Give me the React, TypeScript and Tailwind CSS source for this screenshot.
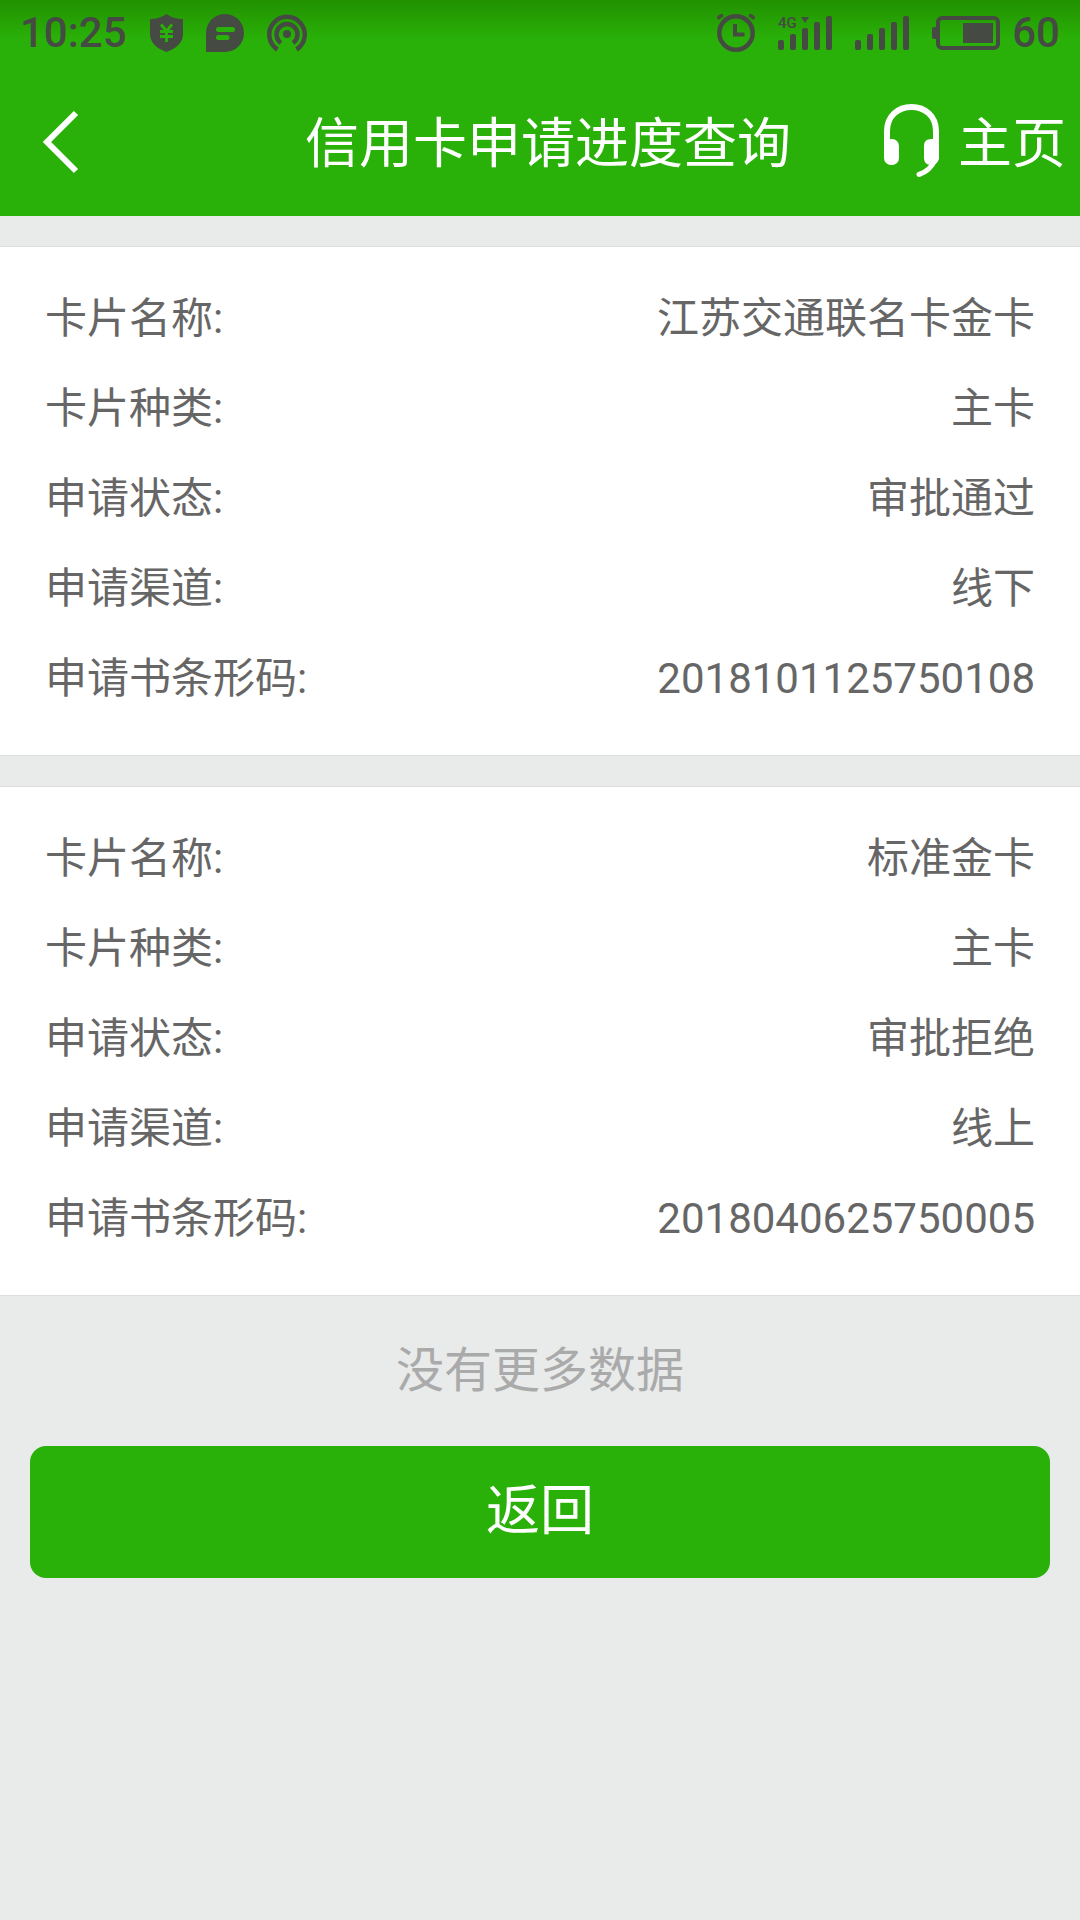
interface Application {
  name: string;
  kind: string;
  status: string;
  channel: string;
  barcode: string;
}

const APPLICATIONS: Application[] = [
  {
    name: "江苏交通联名卡金卡",
    kind: "主卡",
    status: "审批通过",
    channel: "线下",
    barcode: "2018101125750108",
  },
  {
    name: "标准金卡",
    kind: "主卡",
    status: "审批拒绝",
    channel: "线上",
    barcode: "2018040625750005",
  },
];

const FIELDS: { key: keyof Application; label: string }[] = [
  { key: "name", label: "卡片名称:" },
  { key: "kind", label: "卡片种类:" },
  { key: "status", label: "申请状态:" },
  { key: "channel", label: "申请渠道:" },
  { key: "barcode", label: "申请书条形码:" },
];

function ShieldIcon() {
  return (
    <svg width="33" height="38" viewBox="0 0 33 38" aria-hidden="true">
      <path
        d="M16.5 0 C12 3.5 6 5 0 5 V20 C0 29 7 34.5 16.5 38 C26 34.5 33 29 33 20 V5 C27 5 21 3.5 16.5 0Z"
        fill="currentColor"
      />
      <path
        d="M11 10.5 L16.5 17 L22 10.5 M10 17.5 H23 M10 22.5 H23 M16.5 17 V28"
        fill="none"
        stroke="#2ab109"
        strokeWidth="2.8"
      />
    </svg>
  );
}

function ChatIcon() {
  return (
    <svg width="38" height="38" viewBox="0 0 38 38" aria-hidden="true">
      <path d="M0 38 V19 A19 19 0 1 1 19 38Z" fill="currentColor" />
      <path
        d="M12.5 15.5 H26.5 M12.5 23.5 H21"
        stroke="#2ab109"
        strokeWidth="5"
        strokeLinecap="round"
      />
    </svg>
  );
}

function HotspotIcon() {
  return (
    <svg
      width="40"
      height="38"
      viewBox="0 0 40 38"
      fill="none"
      stroke="currentColor"
      strokeWidth="4.5"
      aria-hidden="true"
    >
      <path d="M10.5 35.5 A17.7 17.7 0 1 1 29.5 35.5" />
      <path d="M14 29 A10.5 10.5 0 1 1 26 29" />
      <circle cx="20" cy="20" r="4" fill="currentColor" stroke="none" />
    </svg>
  );
}

function AlarmIcon() {
  return (
    <svg
      width="38"
      height="38"
      viewBox="0 0 38 38"
      fill="none"
      stroke="currentColor"
      strokeWidth="4.5"
      aria-hidden="true"
    >
      <circle cx="19" cy="19" r="16.7" />
      <path d="M18 10 V20.5 H27.5" strokeWidth="4" />
      <path d="M1 5 Q2.5 1.5 6 1.5 M37 5 Q35.5 1.5 32 1.5" strokeWidth="3.5" />
    </svg>
  );
}

function SignalIcon({ network }: { network?: string }) {
  return (
    <svg
      width="54"
      height="34"
      viewBox="0 0 54 34"
      fill="currentColor"
      className="overflow-visible"
      aria-hidden="true"
    >
      <rect x="0" y="24" width="6" height="10" rx="2" />
      <rect x="12" y="18" width="6" height="16" rx="2" />
      <rect x="24" y="12" width="6" height="22" rx="2" />
      <rect x="36" y="6" width="6" height="28" rx="2" />
      <rect x="48" y="0" width="6" height="34" rx="2" />
      {network && (
        <>
          <text x="0" y="12" className="text-[15px] font-medium">
            {network}
          </text>
          <path d="M23 1 H31 L27 7Z" />
        </>
      )}
    </svg>
  );
}

function BatteryIcon() {
  return (
    <svg width="68" height="34" viewBox="0 0 68 34" aria-hidden="true">
      <rect x="6" y="2" width="60" height="30" rx="4" fill="none" stroke="currentColor" strokeWidth="4" />
      <rect x="0" y="11" width="5" height="12" rx="2" fill="currentColor" />
      <rect x="31" y="7" width="30" height="20" fill="currentColor" />
    </svg>
  );
}

function HeadsetIcon() {
  return (
    <svg width="55" height="74" viewBox="0 0 55 74" fill="none" aria-hidden="true">
      <path
        d="M3 52 V27 C3 12 14 3 27.5 3 C41 3 52 12 52 27 V52"
        stroke="currentColor"
        strokeWidth="6"
      />
      <rect x="0" y="35" width="15" height="26" rx="7" fill="currentColor" />
      <path
        d="M40 42 Q40 35 47 35 H52 Q55 35 55 38 V55 Q53 61 47 61 Q40 61 40 54Z"
        fill="currentColor"
      />
      <path d="M51 56 Q46 67 35 70.5" stroke="currentColor" strokeWidth="5" strokeLinecap="round" />
    </svg>
  );
}

function StatusBar() {
  return (
    <div className="flex h-[66px] items-center justify-between bg-linear-to-b from-[#219100] to-[#2ab109] to-60% px-5 text-[#454a43]">
      <div className="flex items-center gap-[23px]">
        <span className="text-[42px] leading-none font-medium">10:25</span>
        <ShieldIcon />
        <ChatIcon />
        <HotspotIcon />
      </div>
      <div className="flex items-center gap-[23px]">
        <AlarmIcon />
        <SignalIcon network="4G" />
        <SignalIcon />
        <div className="flex items-center gap-3">
          <BatteryIcon />
          <span className="text-[42px] leading-none font-medium">60</span>
        </div>
      </div>
    </div>
  );
}

function NavBar() {
  return (
    <nav className="flex h-[150px] items-center bg-[#2ab109] text-[54px] leading-none text-white">
      <div className="w-[212px]">
        <button type="button" aria-label="返回上一页" className="block px-10 py-5">
          <svg width="40" height="66" viewBox="0 0 40 66" fill="none" aria-hidden="true">
            <path d="M36 5 L7 34 L36 63" stroke="currentColor" strokeWidth="6" />
          </svg>
        </button>
      </div>
      <h1 className="flex-1 pt-2 text-center">信用卡申请进度查询</h1>
      <div className="flex items-center gap-[19px] pr-[14px]">
        <button type="button" aria-label="客服">
          <HeadsetIcon />
        </button>
        <a href="#" className="pt-2">
          主页
        </a>
      </div>
    </nav>
  );
}

function ApplicationCard({ application }: { application: Application }) {
  return (
    <dl className="border-y border-[#dcdddc] bg-white px-[45px] pt-[27px] pb-[31px] text-[42px] leading-[90px] text-[#666]">
      {FIELDS.map(({ key, label }) => (
        <div key={key} className="flex justify-between">
          <dt>{label}</dt>
          <dd>{application[key]}</dd>
        </div>
      ))}
    </dl>
  );
}

export default function App() {
  return (
    <div className="min-h-screen bg-[#e8ebea] font-[Roboto,'Noto_Sans_CJK_SC',sans-serif]">
      <header>
        <StatusBar />
        <NavBar />
      </header>
      <main>
        <div className="flex flex-col gap-[30px] pt-[30px]">
          {APPLICATIONS.map((application) => (
            <ApplicationCard key={application.barcode} application={application} />
          ))}
        </div>
        <p className="py-[37px] text-center text-5xl leading-[76px] text-[#aaa]">没有更多数据</p>
        <div className="px-[30px]">
          <button
            type="button"
            className="h-[132px] w-full rounded-2xl bg-[#2ab109] text-[54px] leading-none text-white"
          >
            返回
          </button>
        </div>
      </main>
    </div>
  );
}
